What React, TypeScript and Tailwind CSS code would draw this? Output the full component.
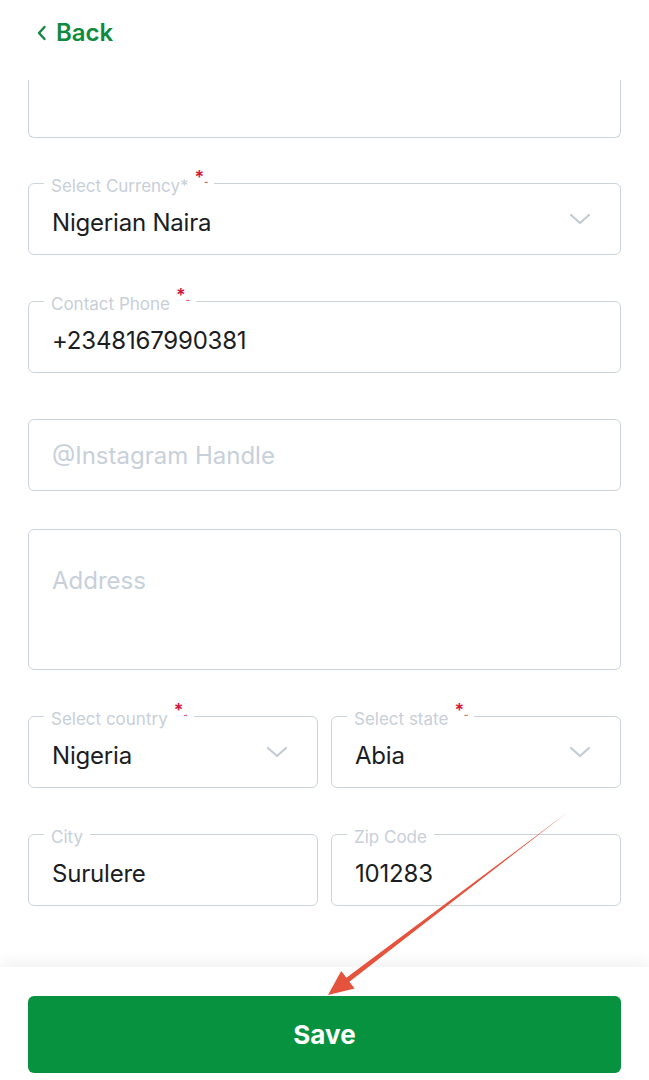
import React from 'react';

const Chevron = () => (
  <svg width="22" height="12" viewBox="0 0 22 12" fill="none" className="shrink-0">
    <path d="M2 2l9 8 9-8" stroke="#c3cbd5" strokeWidth="2.2" strokeLinecap="round" strokeLinejoin="round" />
  </svg>
);

const Required = () => (
  <span className="inline-flex items-start text-[#d6163a] leading-none mt-[-8px]">
    <span className="text-[18px] font-semibold">*</span>
    <span className="text-[9px] mt-[6px] tracking-[-1px]">..</span>
  </span>
);

// outlined field with label sitting on the top border
const Field = ({
  label,
  required,
  value,
  select,
  className = '',
}: {
  label: string;
  required?: boolean;
  value: string;
  select?: boolean;
  className?: string;
}) => (
  <div className={`relative border border-[#cdd3db] rounded-[6px] h-[72px] px-[23px] flex items-center justify-between ${className}`}>
    <span className="absolute left-[15px] top-[-7px] bg-white px-[7px] text-[17px] leading-[18px] text-[#c8cfd8] inline-flex items-start gap-[6px]">
      {label}
      {required && <Required />}
    </span>
    <span className="pt-[7px] text-[24px] text-[#1b1d22] tracking-[-0.2px]">{value}</span>
    {select && <span className="mr-[6px]"><Chevron /></span>}
  </div>
);

export default function App() {
  return (
    <div
      className="relative w-[649px] h-[1080px] bg-white overflow-hidden flex flex-col"
      style={{ fontFamily: 'Inter, "Noto Sans", sans-serif' }}
    >
      <header className="h-[80px] shrink-0 flex items-start pt-[20px] pl-[36px]">
        <button className="flex items-center gap-[9px] text-[#11893f]">
          <svg width="11" height="16" viewBox="0 0 11 16" fill="none">
            <path d="M8.5 2L3 8l5.5 6" stroke="currentColor" strokeWidth="2.4" strokeLinecap="round" strokeLinejoin="round" />
          </svg>
          <span className="text-[24px] font-semibold leading-[26px]">Back</span>
        </button>
      </header>

      <main className="flex-1 px-[28px] flex flex-col">
        <div className="h-[58px] border-x border-b border-[#cdd3db] rounded-b-[6px]" />

        <Field className="mt-[45px]" label="Select Currency*" required value="Nigerian Naira" select />
        <Field className="mt-[46px]" label="Contact Phone" required value="+2348167990381" />

        <div className="mt-[46px] h-[72px] border border-[#cdd3db] rounded-[6px] flex items-center px-[23px]">
          <span className="pt-[2px] text-[24px] text-[#c8d0da]">@Instagram Handle</span>
        </div>

        <div className="mt-[38px] h-[141px] border border-[#cdd3db] rounded-[6px] px-[23px] pt-[36px]">
          <span className="text-[24px] leading-[30px] text-[#c8d0da]">Address</span>
        </div>

        <div className="mt-[46px] grid grid-cols-2 gap-[13px]">
          <Field label="Select country" required value="Nigeria" select />
          <Field label="Select state" required value="Abia" select />
        </div>

        <div className="mt-[46px] grid grid-cols-2 gap-[13px]">
          <Field label="City" value="Surulere" />
          <Field label="Zip Code" value="101283" />
        </div>
      </main>

      <footer className="shrink-0 h-[113px] bg-white shadow-[0_-6px_14px_rgba(0,0,0,0.05)] px-[28px] pt-[29px]">
        <button className="w-full h-[77px] rounded-[6px] bg-[#06923f] text-white text-[26px] font-bold">
          Save
        </button>
      </footer>

      {/* annotation arrow */}
      <svg className="absolute inset-0 pointer-events-none" width="649" height="1080" viewBox="0 0 649 1080">
        <polygon
          points="568,812 349.4,981.8 354.6,988.5 328,995 341.2,971.1 346.4,977.8"
          fill="#e5533d"
        />
      </svg>
    </div>
  );
}
